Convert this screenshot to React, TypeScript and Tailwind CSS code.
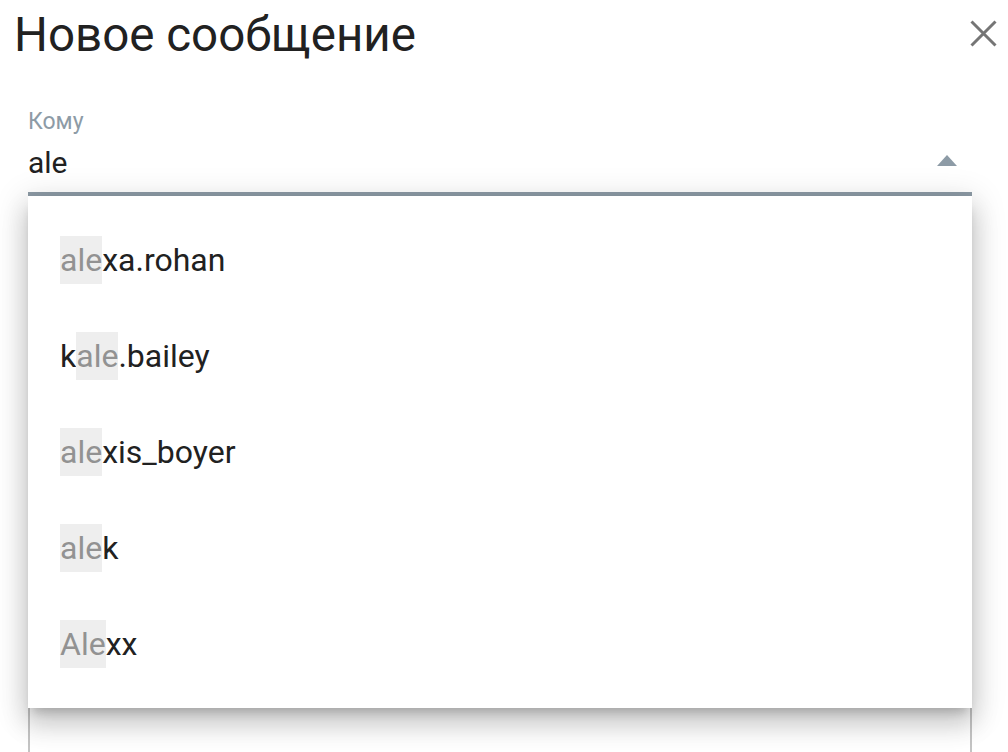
import React from "react";

const items: [string, string, string][] = [
  ["", "ale", "xa.rohan"],
  ["k", "ale", ".bailey"],
  ["", "ale", "xis_boyer"],
  ["", "ale", "k"],
  ["", "Ale", "xx"],
];

export default function App() {
  return (
    <div className="w-[1008px] h-[752px] bg-white overflow-hidden relative" style={{ fontFamily: "Roboto, 'Noto Sans', sans-serif" }}>
      <div className="flex items-start justify-between pl-[14px] pr-[11px] pt-[7px]">
        <h1 className="text-[47.5px] leading-[56px] text-[#212121] font-normal">Новое сообщение</h1>
        <button className="mt-[13px] w-[27px] h-[27px] flex items-center justify-center">
          <svg width="27" height="27" viewBox="0 0 27 27">
            <path d="M1.5 1.5 L25.5 25.5 M25.5 1.5 L1.5 25.5" stroke="#757575" strokeWidth="3" fill="none" />
          </svg>
        </button>
      </div>
      <div className="px-[28px] pt-[46px] w-[1000px]">
        <div className="w-[944px]">
          <div className="text-[23px] leading-[26px] text-[#8d9ba6]">Кому</div>
          <div className="flex items-start justify-between mt-[10px] h-[47px]">
            <span className="text-[30px] leading-[36px] text-[#212121]">ale</span>
            <svg width="20" height="11" viewBox="0 0 20 11" className="mr-[15px] mt-[10px]">
              <path d="M0 11 L10 0 L20 11 Z" fill="#8d9ba6" />
            </svg>
          </div>
          <div className="h-[4px] bg-[#8d9ba6]" />
          <div className="relative pt-[40px]">
            <div className="h-[600px] border-2 border-[#c4c4c4]" />
            <div className="absolute left-0 top-0 w-[944px] bg-white py-[16px] shadow-[0_8px_10px_-5px_rgba(0,0,0,0.2),0_16px_24px_2px_rgba(0,0,0,0.14),0_6px_30px_5px_rgba(0,0,0,0.12)]">
              {items.map(([pre, hl, post], i) => (
                <div key={i} className="h-[96px] flex items-center pl-[32px] text-[32px] text-[#212121]">
                  <span>{pre}</span>
                  <span className="bg-[#eeeeee] text-[#929292]">{hl}</span>
                  <span>{post}</span>
                </div>
              ))}
            </div>
          </div>
        </div>
      </div>
    </div>
  );
}
